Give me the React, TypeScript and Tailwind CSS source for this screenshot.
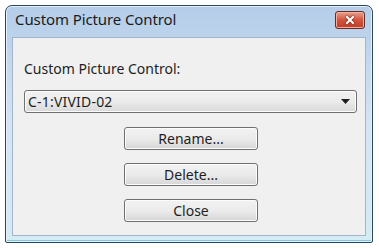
import { X } from 'lucide-react'

const FONT = { fontFamily: '"Noto Sans", "Open Sans", sans-serif' }

function DialogButton({ label }: { label: string }) {
  return (
    <button
      type="button"
      className="w-[134px] h-[23px] rounded-[3px] border border-[#707070] bg-gradient-to-b from-[#f2f2f2] via-[#ebebeb] to-[#d6d6d6] text-[14px] text-[#1e1e1e] leading-none shadow-[inset_0_0_0_1px_#fcfcfc]"
    >
      {label}
    </button>
  )
}

export default function App() {
  return (
    <div className="w-[379px] h-[248px] bg-white pt-[5px] pl-[5px]" style={FONT}>
      <div className="w-[368px] h-[238px] flex flex-col rounded-t-[7px] rounded-b-[2px] border border-[#2b4760] bg-gradient-to-b from-[#b4cde9] via-[#d6e4f3] to-[#d4ecf4] shadow-[inset_0_0_0_1px_#e6f0fa,inset_0_-2px_0_0_#7fcbe0]">
        {/* title bar */}
        <div className="h-[31px] flex items-start justify-between pl-[9px] pr-[7px]">
          <span className="mt-[2px] text-[15px] text-[#1b1b1b] tracking-[-0.1px]">Custom Picture Control</span>
          <div className="mt-[5px] w-[30px] h-[18px] rounded-[3px] border border-[#6b2a20] bg-gradient-to-b from-[#e8a090] via-[#d0553f] to-[#c23c27] shadow-[inset_0_0_0_1px_#eeb0a0] flex items-center justify-center">
            <X size={12} strokeWidth={4} className="text-white drop-shadow-[0_0_1px_#5a1a10]" />
          </div>
        </div>

        {/* client area */}
        <div className="mx-[6px] mb-[6px] flex-1 border border-[#9fb6cc] bg-[#f0f0f0] pl-[11px] pr-[8px] pt-[22px] flex flex-col">
          <div className="text-[14px] text-[#1e1e1e] leading-[18px]">Custom Picture Control:</div>
          <div className="mt-[12px] h-[23px] rounded-[3px] border border-[#707070] bg-gradient-to-b from-[#f2f2f2] via-[#ebebeb] to-[#d9d9d9] shadow-[inset_0_0_0_1px_#fcfcfc] flex items-center justify-between pl-[3px] pr-[6px]">
            <span className="text-[14px] text-[#1e1e1e] tracking-[0.2px]">C-1:VIVID-02</span>
            <svg width="9" height="5" viewBox="0 0 9 5">
              <path d="M0 0 H9 L4.5 5 Z" fill="#1e1e1e" />
            </svg>
          </div>
          <div className="mt-[14px] flex flex-col items-center gap-[13px] pl-[1px]">
            <DialogButton label="Rename..." />
            <DialogButton label="Delete..." />
            <DialogButton label="Close" />
          </div>
        </div>
      </div>
    </div>
  )
}
